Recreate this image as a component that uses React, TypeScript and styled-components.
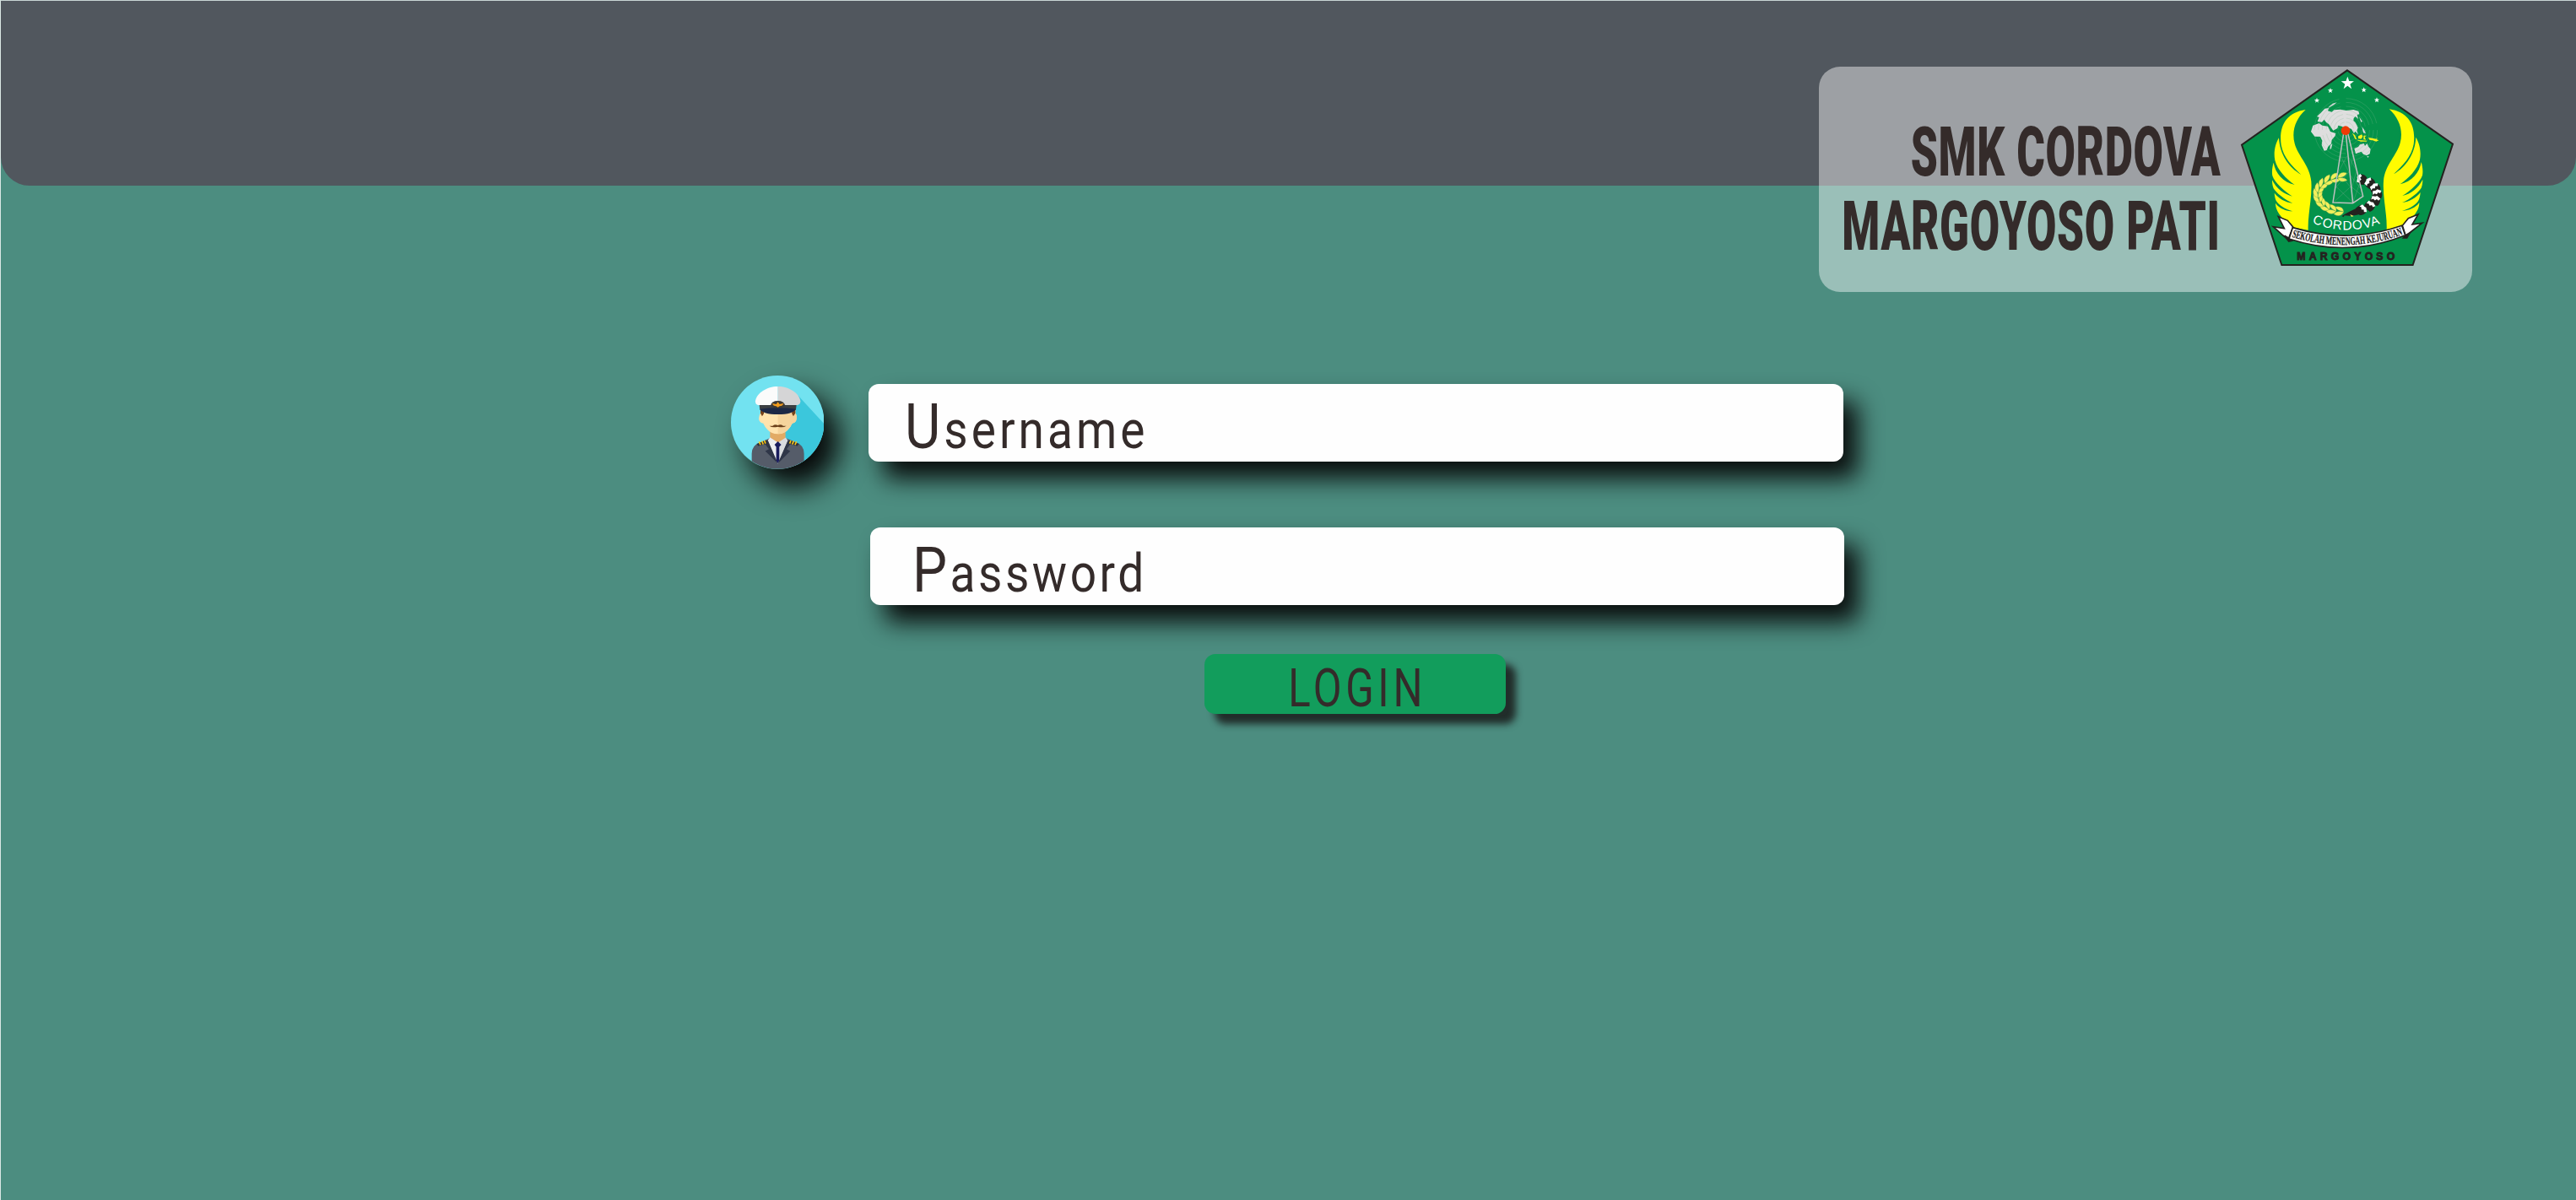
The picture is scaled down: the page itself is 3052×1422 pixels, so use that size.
import React from "react";
import styled, { createGlobalStyle } from "styled-components";

const GlobalStyle = createGlobalStyle`
  *, *::before, *::after { box-sizing: border-box; }
  body { margin: 0; background: #4c8d80; }
`;

const ink = "#342b2a";

const Page = styled.div`
  display: flex;
  flex-direction: column;
  height: 1422px;
  border-top: 1px solid #c9d6d5;
  border-left: 1px solid #dbe8e5;
  background: #4c8d80;
  color: ${ink};
  font-family: Roboto, "Liberation Sans", sans-serif;
  overflow: hidden;
`;

const Header = styled.header`
  display: flex;
  justify-content: flex-end;
  align-items: flex-start;
  flex: none;
  height: 219px;
  padding: 78px 123px 0 0;
  background: #51575e;
  border-radius: 0 0 34px 34px;
`;

const SchoolCard = styled.div`
  display: flex;
  align-items: flex-start;
  justify-content: flex-end;
  flex: none;
  width: 774px;
  height: 267px;
  padding-right: 20px;
  border-radius: 25px;
  background: rgba(255, 255, 255, 0.44);
`;

const SchoolName = styled.h1`
  display: flex;
  flex-direction: column;
  align-items: flex-end;
  margin: 0;
  padding: 57px 23px 0 0;
  font-size: 81.5px;
  font-weight: 900;
  line-height: 88px;
`;

const Stretched = styled.span<{ $scale: number; $origin?: string; $spacing?: number; $initial?: number }>`
  display: block;
  white-space: nowrap;
  letter-spacing: ${(p) => p.$spacing ?? 0}px;
  transform: scaleX(${(p) => p.$scale});
  transform-origin: ${(p) => p.$origin ?? "left"} center;

  &::first-letter {
    font-size: ${(p) => (p.$initial ? `${p.$initial}px` : "inherit")};
  }
`;

const LogoSvg = styled.svg`
  display: block;
  flex: none;
  width: 255px;
  height: 237px;
`;

const LoginForm = styled.main`
  display: grid;
  grid-template-columns: 163.6px 1156px;
  padding: 225px 0 0 864.9px;
  align-items: start;
`;

const Avatar = styled.div`
  width: 110.6px;
  height: 110.6px;
  border-radius: 50%;
  box-shadow: 19px 22px 34px 0 rgba(5, 5, 5, 0.98);
`;

const AvatarSvg = styled.svg`
  display: block;
  width: 110.6px;
  height: 110.6px;
`;

const Fields = styled.div`
  display: flex;
  flex-direction: column;
  padding-top: 9.7px;
`;

const Field = styled.div<{ $indent: number; $shift?: number; $gap?: number }>`
  width: 1154.4px;
  height: 92.6px;
  margin: ${(p) => p.$gap ?? 0}px 0 0 ${(p) => p.$shift ?? 0}px;
  padding: 5px 0 0 ${(p) => p.$indent}px;
  border-radius: 12px;
  background: #fefefe;
  box-shadow: 17px 20px 29px 0 rgba(6, 6, 6, 0.95);
  font-size: 62.5px;
  line-height: 92px;
`;

const LoginButton = styled.button`
  display: flex;
  justify-content: center;
  width: 357.5px;
  height: 71px;
  margin: 57.5px 0 0 397.5px;
  padding: 5px 0 0 5px;
  border: 0;
  border-radius: 13px;
  background: #129d5c;
  box-shadow: 12px 12px 9px 0 rgba(20, 14, 14, 0.76);
  color: ${ink};
  font: 400 63px/71px Roboto, "Liberation Sans", sans-serif;
`;

const star = (cx: number, cy: number, r: number) =>
  Array.from({ length: 10 }, (_, i) => {
    const a = (i * Math.PI) / 5 - Math.PI / 2;
    const d = i % 2 ? r * 0.4 : r;
    return `${(cx + d * Math.cos(a)).toFixed(1)},${(cy + d * Math.sin(a)).toFixed(1)}`;
  }).join(" ");

const wing =
  "M275 180 C240 212 224 255 236 300 C247 344 290 378 295 435 C299 495 282 550 284 608 L228 598 L200 575 C180 550 168 535 168 512 C180 530 205 541 229 541 C200 533 182 520 173 508 C167 500 165 488 164 476 C180 496 203 509 229 512 C200 500 170 475 161 460 C157 450 156 440 156 430 C170 460 200 482 228 488 C200 470 165 440 157 415 C154 400 157 382 161 368 C167 405 195 438 236 447 C205 425 175 395 166 360 C160 330 168 300 180 280 C183 340 215 385 259 411 C225 378 196 350 188 305 C179 240 205 190 275 180 Z";

const wheatLeaves = Array.from({ length: 11 }, (_, i) => {
  const deg = 100 + i * 16.5;
  const t = (deg * Math.PI) / 180;
  return { x: 412 + 94 * Math.cos(t), y: 481 + 61 * Math.sin(t), rot: deg + 90 };
});

const cottonBolls = Array.from({ length: 7 }, (_, i) => {
  const deg = -62 + i * 21;
  const t = (deg * Math.PI) / 180;
  return { x: 428 + 101 * Math.cos(t), y: 482 + 61 * Math.sin(t), rot: deg + 90 };
});

function SchoolLogo() {
  return (
    <LogoSvg viewBox="42 27 765 711">
      <defs>
        <path id="ribbonLine" d="M226 632 Q425 694 626 622" />
        <path id="nameLine" d="M298 582 Q420 632 546 583" />
      </defs>
      <polygon points="423,40 798,302 656,732 190,732 48,305" fill="#04924a" stroke="#24221f" strokeWidth="6" />
      <g fill="#fff">
        <polygon points={star(424, 86, 24)} />
        <polygon points={star(363, 112, 10)} />
        <polygon points={star(482, 110, 10)} />
        <polygon points={star(315, 147, 10)} />
        <polygon points={star(528, 146, 10)} />
      </g>
      <g fill="#dedede">
        <path d="M328 192 L343 176 L358 174 L354 184 L368 188 L376 181 L398 179 L420 183 L445 180 L463 185 L466 196 L458 198 L462 213 L452 204 L446 210 L445 219 L451 224 L457 235 L461 244 L457 254 L462 268 L451 257 L447 264 L438 249 L430 245 L421 266 L406 240 L391 236 L388 246 L373 254 L357 231 L348 225 L341 215 L333 224 L317 222 L323 207 L315 204 Z" />
        <path d="M354 174 Q365 159 386 154 Q376 164 359 172 Z" />
        <path d="M301 236 L323 228 L334 236 L354 239 L363 258 L382 264 L380 273 L368 287 L366 301 L355 311 L350 324 L341 326 L332 306 L334 290 L327 276 L307 275 L294 258 Z" />
        <path d="M363 306 L370 301 L366 318 L361 322 Z" />
        <path d="M448 318 L462 312 L468 304 L482 300 L486 309 L493 300 L499 312 L506 320 L503 337 L492 343 L480 338 L473 329 L453 337 Z M493 345 L500 346 L496 351 Z" />
        <path d="M465 205 L477 222 L472 224 Z M475 240 L483 251 L489 265 L480 262 Z" />
      </g>
      <g fill="none" stroke="#83ba92" strokeWidth="1.5" opacity="0.5">
        {[28, 42, 56, 70, 84, 98, 112].map((r) => (
          <circle key={r} cx="418" cy="252" r={r} strokeDasharray={`${r * 1.35} ${r * 0.22}`} />
        ))}
      </g>
      <path
        fill="#f6f21c"
        d="M441 263 L450 270 L457 286 L451 284 Z M462 274 L475 268 L478 276 L472 284 L462 282 Z M481 272 L492 272 L485 277 L489 287 L481 286 Z M456 287 L474 289 L493 290 L491 293 L470 293 Z M498 279 L512 281 L526 284 L530 278 L528 286 L535 289 L526 293 L513 289 L502 287 Z"
      />
      {[false, true].map((flip) => (
        <path key={String(flip)} d={wing} fill="#fffc00" transform={flip ? "translate(847 -2) scale(-1 1)" : undefined} />
      ))}
      <g fill="#f2ef5c" stroke="#4f9d43" strokeWidth="1">
        {wheatLeaves.map((l, i) => (
          <g key={i} transform={`translate(${l.x} ${l.y}) rotate(${l.rot})`}>
            <path d="M-15 1 Q-8 -24 19 -14 Q13 1 -15 1 Z" />
            <path d="M-15 1 Q-8 23 18 13 Q11 0 -15 1 Z" />
          </g>
        ))}
      </g>
      <g>
        <path d="M404 558 Q425 544 466 526 L480 548 Q448 560 413 556 L409 562 Z" fill="#24221f" />
        {cottonBolls.map((b, i) => (
          <g key={i} transform={`translate(${b.x} ${b.y}) rotate(${b.rot})`}>
            <path d="M-14 -14 Q0 -22 13 -14 L15 14 Q0 21 -12 15 Z" fill="#24221f" />
            <path d="M-15 -15 L-6 -11 L-9 -3 L-2 1 L-5 9 L0 15 L-13 16 L-16 5 L-20 0 Z" fill="#fff" />
          </g>
        ))}
        <path d="M433 552 L446 558 L438 561 Z" fill="#f2ef5c" />
      </g>
      <g fill="none" stroke="#a3b5a8" strokeWidth="1.3" opacity="0.6">
        <path d="M399 345 L431 405 M422 345 L389 405 M390 400 L438 460 M430 400 L380 460 M382 452 L443 510 M437 452 L373 510 M429 350 L458 400 M442 350 L430 400 M455 400 L438 460 M432 410 L470 460 M466 445 L443 510 M439 455 L478 488" />
      </g>
      <g fill="none" stroke="#bfc1c0" strokeWidth="4.5">
        <path d="M410 264 L372 510 L443 512 L479 488 L425 264 M418 264 L443 512" />
      </g>
      <circle cx="417" cy="254" r="16" fill="#ed3b05" />
      <text fill="#fff" fontFamily="Liberation Sans, Arial, sans-serif" fontSize="46">
        <textPath href="#nameLine" textLength="248" lengthAdjust="spacing">
          CORDOVA
        </textPath>
      </text>
      <g stroke="#24221f" strokeWidth="5" fill="#fff" strokeLinejoin="miter">
        <path d="M178 560 L211 574 L230 597 L213 642 L195 627 L160 596 L199 602 Z" />
        <path d="M675 552 L640 566 L619 592 L631 630 L652 612 L689 583 L654 588 Z" />
        <path d="M200 628 L214 636 L226 646 L215 648 Z M646 617 L632 625 L622 636 L635 636 Z" fill="#24221f" />
        <path d="M229 599 Q425 659 617 592 L629 626 Q425 708 216 639 Z" />
      </g>
      <text
        fill="#1d1b1a"
        stroke="#1d1b1a"
        strokeWidth="0.8"
        fontFamily="Liberation Serif, Times New Roman, serif"
        fontSize="40"
        fontWeight="700"
      >
        <textPath href="#ribbonLine" textLength="402" lengthAdjust="spacingAndGlyphs">
          SEKOLAH MENENGAH KEJURUAN
        </textPath>
      </text>
      <text
        x="244"
        y="714"
        fill="#24221f"
        stroke="#24221f"
        strokeWidth="2.6"
        fontFamily="Liberation Sans, Arial, sans-serif"
        fontSize="37"
        fontWeight="700"
        textLength="348"
      >
        MARGOYOSO
      </text>
    </LogoSvg>
  );
}

function CaptainAvatar() {
  return (
    <AvatarSvg viewBox="49 44 332 332">
      <defs>
        <clipPath id="disc">
          <circle cx="215" cy="210" r="166" />
        </clipPath>
      </defs>
      <g clipPath="url(#disc)">
        <rect x="49" y="44" width="332" height="332" fill="#72e2f0" />
        <path d="M288 115 L390 226 L390 380 L300 380 L215 260 Z" fill="#3bc7dc" />
        <path d="M123 380 V322 Q123 292 150 284 L188 266 H243 L282 282 Q309 292 309 322 V380 Z" fill="#555c69" />
        <path d="M188 236 H243 V272 L216 292 L188 272 Z" fill="#e2ab65" />
        <path d="M188 265 L216 283 L244 265 L252 276 L216 358 L180 276 Z" fill="#d9dcdf" />
        <path d="M188 265 L216 283 V358 L180 276 Z" fill="#eceef0" />
        <path d="M180 274 L216 357 L171 313 L184 306 L168 284 Z" fill="#2f3648" />
        <path d="M252 274 L216 357 L260 313 L247 306 L263 284 Z" fill="#2f3648" />
        <path d="M216 278 L228 290 L221 298 V346 L216 356 L210 346 V298 L204 290 Z" fill="#191c5e" />
        <path d="M140 287 L174 274 L180 286 L146 295 Z M291 287 L257 274 L251 286 L285 295 Z" fill="#2b303d" />
        <path d="M149 279 l5 12 M159 277 l5 12 M168 275 l4 11 M282 279 l-5 12 M272 277 l-5 12 M262 275 l-4 11" stroke="#f9c515" strokeWidth="5" />
        <path d="M154 160 H278 V178 Q286 186 281 204 Q276 214 267 214 Q250 252 216 252 Q181 252 164 214 Q153 213 149 202 Q147 186 154 178 Z" fill="#ffe3ad" />
        <path d="M216 160 H278 V178 Q286 186 281 204 Q276 214 267 214 Q250 252 216 252 Z" fill="#f5d49c" />
        <path d="M154 162 H166 V180 L160 189 L154 178 Z M278 162 H266 V180 L271 189 L278 178 Z" fill="#77431a" />
        <path d="M216 221 Q226 216 235 223 L246 223 Q235 231 216 226 Q196 231 186 223 L197 223 Q206 216 216 221 Z" fill="#6c421b" />
        <path d="M136 135 C140 105 180 82 216 83 V150 H149 Q135 148 136 135 Z" fill="#fbfbfb" />
        <path d="M296 135 C292 105 252 82 216 83 V150 H282 Q297 148 296 135 Z" fill="#d5d5d6" />
        <path d="M150 149 H282 L280 166 H152 Z" fill="#3b3f42" />
        <path d="M152 163 Q216 155 280 163 Q270 182 216 182 Q162 182 152 163 Z" fill="#1c2845" />
        <path d="M190 151 Q193 134 216 134 Q238 134 242 151 Q230 160 216 160 Q202 160 190 151 Z" fill="#3b3835" />
        <path d="M196 143 L210 146 L216 138 L222 146 L236 143 Q233 153 222 153 L216 157 L210 153 Q199 153 196 143 Z" fill="#f39c1c" />
      </g>
    </AvatarSvg>
  );
}

export default function App() {
  return (
    <>
      <GlobalStyle />
      <Page>
        <Header>
          <SchoolCard>
            <SchoolName>
              <Stretched $scale={0.63} $origin="right" $spacing={1}>SMK CORDOVA</Stretched>
              <Stretched $scale={0.63} $origin="right" $spacing={1}>MARGOYOSO PATI</Stretched>
            </SchoolName>
            <SchoolLogo />
          </SchoolCard>
        </Header>
        <LoginForm>
          <Avatar>
            <CaptainAvatar />
          </Avatar>
          <Fields>
            <Field $indent={43}>
              <Stretched $scale={0.88} $spacing={4.6} $initial={74}>Username</Stretched>
            </Field>
            <Field $indent={50.5} $shift={1.2} $gap={77.6}>
              <Stretched $scale={0.88} $spacing={4} $initial={74}>Password</Stretched>
            </Field>
            <LoginButton type="button">
              <Stretched $scale={0.78} $spacing={6} $origin="center">LOGIN</Stretched>
            </LoginButton>
          </Fields>
        </LoginForm>
      </Page>
    </>
  );
}
